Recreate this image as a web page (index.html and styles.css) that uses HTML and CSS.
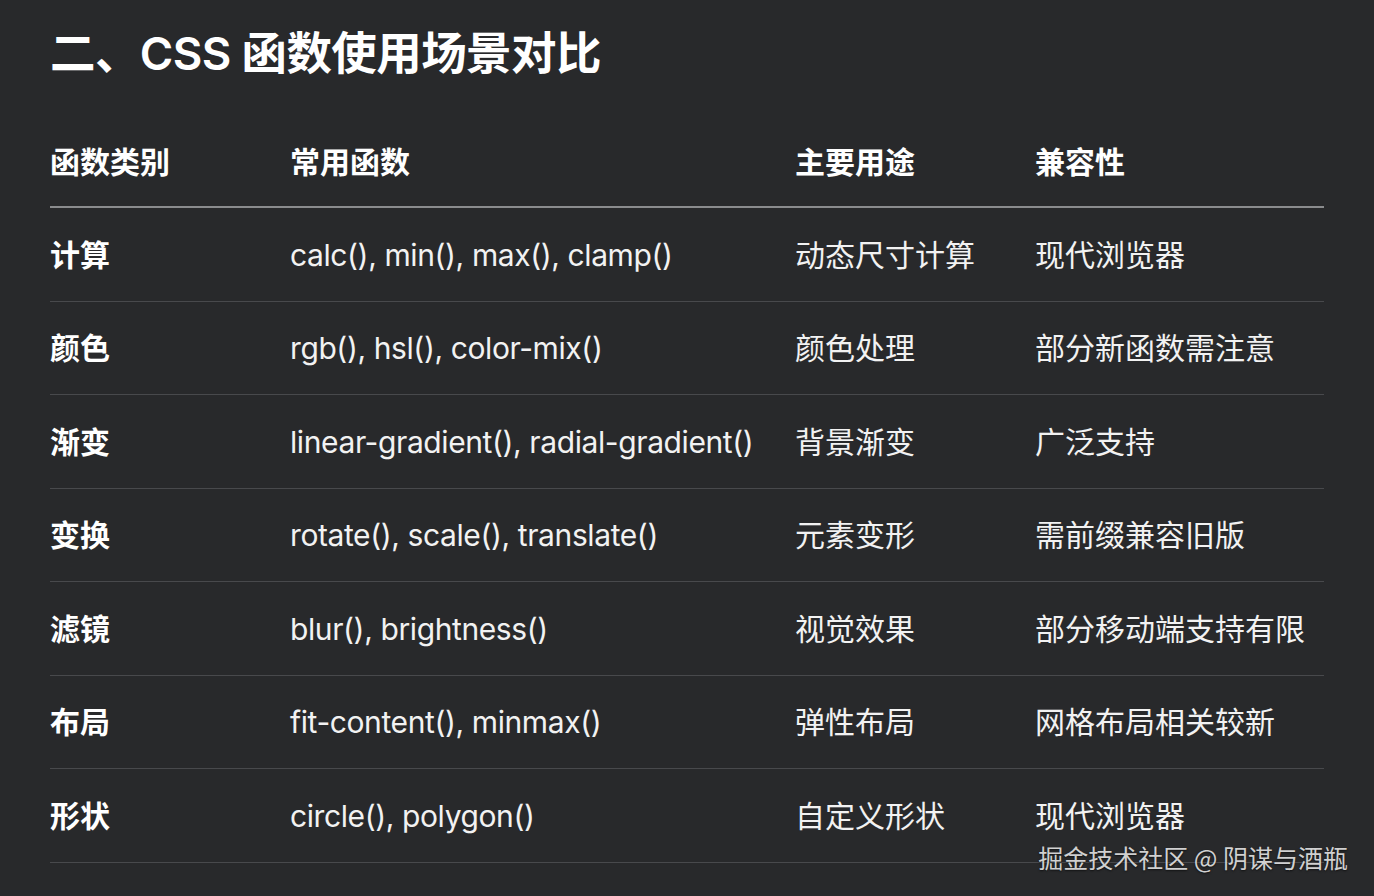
FILE: index.html
```html
<!DOCTYPE html>
<html lang="zh-CN">
<head>
<meta charset="utf-8">
<title>CSS 函数使用场景对比</title>
<link rel="stylesheet" href="styles.css">
</head>
<body>
<div class="page">
  <h1 class="title">二、CSS 函数使用场景对比</h1>
  <div class="table">
    <div class="row head">
      <div class="cell">函数类别</div>
      <div class="cell">常用函数</div>
      <div class="cell">主要用途</div>
      <div class="cell">兼容性</div>
    </div>
    <div class="row">
      <div class="cell strong">计算</div>
      <div class="cell code">calc(), min(), max(), clamp()</div>
      <div class="cell">动态尺寸计算</div>
      <div class="cell">现代浏览器</div>
    </div>
    <div class="row">
      <div class="cell strong">颜色</div>
      <div class="cell code">rgb(), hsl(), color-mix()</div>
      <div class="cell">颜色处理</div>
      <div class="cell">部分新函数需注意</div>
    </div>
    <div class="row">
      <div class="cell strong">渐变</div>
      <div class="cell code">linear-gradient(), radial-gradient()</div>
      <div class="cell">背景渐变</div>
      <div class="cell">广泛支持</div>
    </div>
    <div class="row">
      <div class="cell strong">变换</div>
      <div class="cell code">rotate(), scale(), translate()</div>
      <div class="cell">元素变形</div>
      <div class="cell">需前缀兼容旧版</div>
    </div>
    <div class="row">
      <div class="cell strong">滤镜</div>
      <div class="cell code">blur(), brightness()</div>
      <div class="cell">视觉效果</div>
      <div class="cell">部分移动端支持有限</div>
    </div>
    <div class="row">
      <div class="cell strong">布局</div>
      <div class="cell code">fit-content(), minmax()</div>
      <div class="cell">弹性布局</div>
      <div class="cell">网格布局相关较新</div>
    </div>
    <div class="row">
      <div class="cell strong">形状</div>
      <div class="cell code">circle(), polygon()</div>
      <div class="cell">自定义形状</div>
      <div class="cell">现代浏览器</div>
    </div>
  </div>
  <div class="watermark">掘金技术社区 @ 阴谋与酒瓶</div>
</div>
</body>
</html>
```
FILE: styles.css
```css
* { box-sizing: border-box; }
html, body {
  margin: 0;
  padding: 0;
  background: #28292b;
}
body {
  font-family: "Inter", "Noto Sans CJK SC", sans-serif;
  color: #f2f2f2;
  width: 1374px;
  height: 896px;
  overflow: hidden;
}
.page {
  position: relative;
  height: 896px;
  padding: 24px 50px 0 50px;
}
.title {
  margin: 0;
  font-size: 45.5px;
  line-height: 60px;
  font-weight: 600;
  color: #ffffff;
  letter-spacing: -0.6px;
}
.table {
  margin-top: 31px;
  width: 1274px;
}
.row {
  display: grid;
  grid-template-columns: 240px 505px 240px 1fr;
  align-items: center;
  height: 93.5px;
  padding-top: 1px;
  border-bottom: 1px solid #48494c;
  font-size: 30px;
  line-height: 40px;
}
.row.head {
  height: 93px;
  padding-top: 2px;
  border-bottom: 2px solid #8a8b8d;
  font-weight: 700;
  color: #ffffff;
}
.cell {
  white-space: nowrap;
}
.code {
  letter-spacing: -0.4px;
}
.strong {
  font-weight: 700;
  color: #ffffff;
}
.watermark {
  position: absolute;
  right: 26px;
  top: 839px;
  font-size: 25px;
  line-height: 36px;
  color: rgba(235, 235, 235, 0.88);
  text-shadow: 0 1px 2px rgba(0, 0, 0, 0.6);
  font-family: "Noto Sans CJK SC", sans-serif;
}
```
